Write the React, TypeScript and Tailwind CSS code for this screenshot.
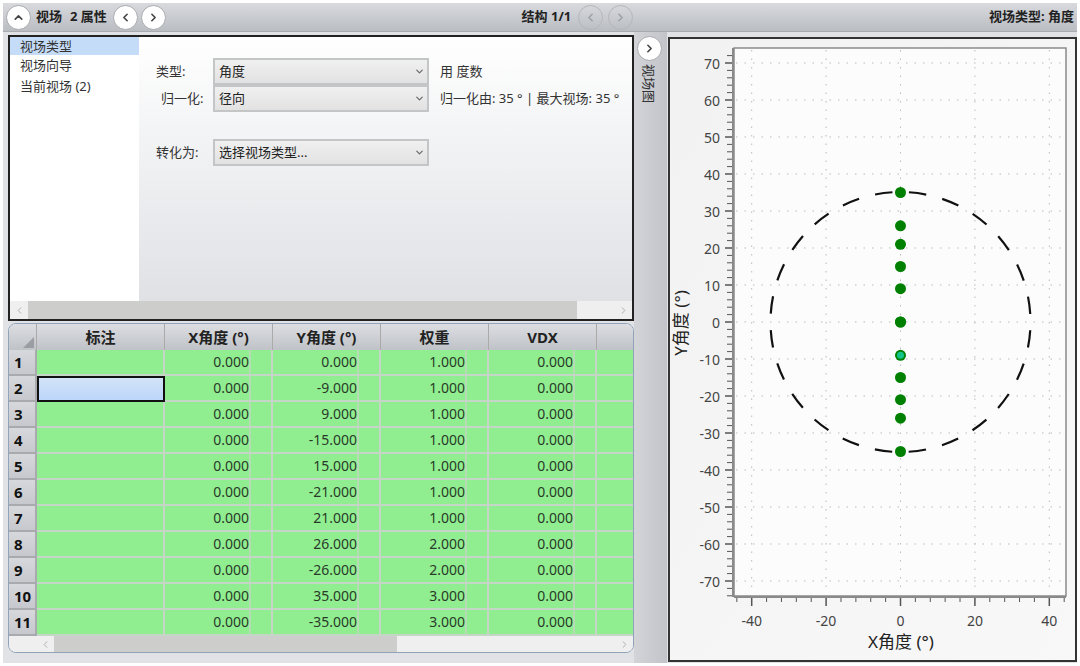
import { ChevronDown, ChevronLeft, ChevronRight, ChevronUp } from "lucide-react";

const rows = [
    ["0.000", "0.000", "1.000"],
    ["0.000", "-9.000", "1.000"],
    ["0.000", "9.000", "1.000"],
    ["0.000", "-15.000", "1.000"],
    ["0.000", "15.000", "1.000"],
    ["0.000", "-21.000", "1.000"],
    ["0.000", "21.000", "1.000"],
    ["0.000", "26.000", "2.000"],
    ["0.000", "-26.000", "2.000"],
    ["0.000", "35.000", "3.000"],
    ["0.000", "-35.000", "3.000"],
];

const fields = [0, 26, 21, 15, 9, 0, -9, -15, -21, -26, 35, -35];

const sx = (v: number) => 900.5 + v * 3.72;
const sy = (v: number) => 322 - v * 3.7;

const yMajor = [70, 60, 50, 40, 30, 20, 10, 0, -10, -20, -30, -40, -50, -60, -70];
const xMajor = [-40, -20, 0, 20, 40];

const RoundButton = ({ children, disabled }: { children: React.ReactNode; disabled?: boolean }) => (
    <div
        className={
            disabled
                ? "w-[25px] h-[25px] rounded-full border border-[#b4b6ba] flex items-center justify-center text-[#a0a2a6]"
                : "w-[25px] h-[25px] rounded-full bg-white border border-[#a8aaae] flex items-center justify-center text-[#444]"
        }
    >
        {children}
    </div>
);

const Select = ({ label }: { label: string }) => (
    <div className="w-[216px] h-[27px] flex items-center justify-between pl-[4px] pr-[2px] border-2 border-[#c4c5c7] bg-gradient-to-b from-[#f0f0f0] to-[#e2e2e2] text-[13px] text-[#222]">
        <span>{label}</span>
        <ChevronDown size={11} strokeWidth={2.5} className="text-[#666]" />
    </div>
);

const NumCell = ({ value }: { value: string }) => (
    <div className="flex border-r-2 border-b-2 border-[#c6d6c6] bg-[#90ee90] text-[14px] text-[#2a3a2a]">
        <div className="w-[84px] text-right leading-[24px]">{value}</div>
        <div className="flex-1 border-l-2 border-[#b6dcb6]" />
    </div>
);

const Chart = () => (
    <svg width="405" height="621" viewBox="670 39 405 621" className="block overflow-visible">
        <rect x="734" y="48" width="332" height="548" fill="#fcfcfc" stroke="#8a8a8a" strokeWidth="1.5" />
        {yMajor.map((v) => (
            <line key={v} x1="736" x2="1065" y1={sy(v)} y2={sy(v)} stroke="#bbb" strokeWidth="1" strokeDasharray="1.5 7" />
        ))}
        {xMajor.map((v) => (
            <line key={v} x1={sx(v)} x2={sx(v)} y1="50" y2="594" stroke="#bbb" strokeWidth="1" strokeDasharray="1.5 7" />
        ))}
        {Array.from({ length: 74 }, (_, i) => 72 - i * 2).map((v) => (
            <line key={v} x1={v % 10 === 0 ? 725 : 727} x2="734" y1={sy(v)} y2={sy(v)} stroke="#555" strokeWidth={v % 10 === 0 ? 1.5 : 1} />
        ))}
        {Array.from({ length: 23 }, (_, i) => -44 + i * 4).map((v) => (
            <line key={v} x1={sx(v)} x2={sx(v)} y1="596" y2={v % 20 === 0 ? 606 : 602} stroke="#555" strokeWidth={v % 20 === 0 ? 1.5 : 1} />
        ))}
        <line x1="734" x2="1066" y1="597" y2="597" stroke="#8a8a8a" strokeWidth="2" />
        <line x1="733" x2="733" y1="48" y2="597" stroke="#8a8a8a" strokeWidth="2" />
        {yMajor.map((v) => (
            <text key={v} x="720" y={sy(v) + 5.5} textAnchor="end" fontSize="14" fill="#444">{v}</text>
        ))}
        {xMajor.map((v) => (
            <text key={v} x={sx(v)} y="626" textAnchor="middle" fontSize="14" fill="#444">{v}</text>
        ))}
        <text x="901" y="648" textAnchor="middle" fontSize="17" fill="#222">X角度 (°)</text>
        <text x="687" y="323" textAnchor="middle" fontSize="17" fill="#222" transform="rotate(-90 687 323)">Y角度 (°)</text>
        <circle cx="900.5" cy="322" r="130" fill="none" stroke="#111" strokeWidth="2.2" strokeDasharray="17.5 16.53" transform="rotate(3.64 900.5 322)" />
        {fields.map((v, i) => (
            <circle key={i} cx="900.5" cy={sy(v)} r="5.5" fill="#008000" />
        ))}
        <circle cx="900.5" cy={sy(-9)} r="3.5" fill="#12c48a" />
    </svg>
);

export default function App() {
    return (
        <div className="w-[1080px] h-[666px] overflow-hidden bg-white pl-[3px] pt-[3px] pr-[3px] font-['Noto_Sans','Noto_Sans_CJK_SC',sans-serif]">
            <div className="h-[660px] bg-[#e0e2e6] flex flex-col">
                <div className="h-[29px] shrink-0 flex items-center justify-between pl-[3px] pr-[3px] bg-gradient-to-b from-[#d8dade] to-[#babdc2] border-b border-[#a9abaf] text-[13px] font-bold text-[#222]">
                    <div className="flex items-center">
                        <RoundButton><ChevronUp size={13} strokeWidth={3} /></RoundButton>
                        <span className="ml-[5px]">视场</span>
                        <span className="ml-[8px]">2 属性</span>
                        <div className="ml-[6px] flex gap-[3px]">
                            <RoundButton><ChevronLeft size={13} strokeWidth={3} /></RoundButton>
                            <RoundButton><ChevronRight size={13} strokeWidth={3} /></RoundButton>
                        </div>
                    </div>
                    <div className="flex items-center">
                        <span>结构 1/1</span>
                        <div className="ml-[7px] flex gap-[5px]">
                            <RoundButton disabled><ChevronLeft size={13} strokeWidth={3} /></RoundButton>
                            <RoundButton disabled><ChevronRight size={13} strokeWidth={3} /></RoundButton>
                        </div>
                    </div>
                    <span>视场类型: 角度</span>
                </div>

                <div className="flex flex-1 min-h-0">
                    <div className="w-[631px] shrink-0 pl-[5px] pt-[3px] flex flex-col">
                        <div className="h-[286px] border-2 border-[#222] flex flex-col bg-white">
                            <div className="flex flex-1 min-h-0">
                                <div className="w-[129px] shrink-0 bg-white text-[13px] text-[#333]">
                                    <div className="h-[18px] pl-[10px] leading-[18px] bg-[#c5dcf8]">视场类型</div>
                                    <div className="h-[21px] pl-[10px] leading-[21px]">视场向导</div>
                                    <div className="h-[20px] pl-[10px] leading-[20px]">当前视场 (2)</div>
                                </div>
                                <div className="flex-1 bg-gradient-to-b from-white to-[#dfe1e5] pt-[21px] text-[13px] text-[#333]">
                                    <div className="flex items-center h-[27px]">
                                        <div className="w-[74px] pl-[17px]">类型:</div>
                                        <Select label="角度" />
                                        <div className="ml-[11px]">用 度数</div>
                                    </div>
                                    <div className="flex items-center h-[27px]">
                                        <div className="w-[74px] pl-[22px]">归一化:</div>
                                        <Select label="径向" />
                                        <div className="ml-[11px] whitespace-nowrap">归一化由: 35 ° | 最大视场: 35 °</div>
                                    </div>
                                    <div className="flex items-center h-[27px] mt-[27px]">
                                        <div className="w-[74px] pl-[17px]">转化为:</div>
                                        <Select label="选择视场类型..." />
                                    </div>
                                </div>
                            </div>
                            <div className="h-[18px] shrink-0 flex items-center bg-[#cdcdcb]">
                                <div className="w-[18px] h-full bg-[#efefef] flex items-center justify-center text-[#aaa]"><ChevronLeft size={11} /></div>
                                <div className="flex-1" />
                                <div className="w-[55px] h-full bg-[#efefef] flex items-center justify-end pr-[3px] text-[#aaa]"><ChevronRight size={11} /></div>
                            </div>
                        </div>

                        <div className="mt-[2px] h-[330px] border border-[#8fa3ba] rounded-[8px] overflow-hidden flex flex-col bg-[#efefef]">
                            <div className="grid grid-cols-[28px_128px_108px_108px_108px_108px_1fr] h-[26px] shrink-0 bg-gradient-to-b from-[#dcdee2] to-[#bfc2c7] text-[15px] font-bold text-[#222] text-center leading-[26px]">
                                <div className="border-r border-[#aaa] flex items-end justify-end pr-[2px] pb-[2px]">
                                    <div className="w-0 h-0 border-l-[11px] border-l-transparent border-b-[11px] border-b-[#9a9da1]" />
                                </div>
                                <div className="border-r border-[#aaa]">标注</div>
                                <div className="border-r border-[#aaa]">X角度 (°)</div>
                                <div className="border-r border-[#aaa]">Y角度 (°)</div>
                                <div className="border-r border-[#aaa]">权重</div>
                                <div className="border-r border-[#aaa]">VDX</div>
                                <div />
                            </div>
                            <div className="grid grid-cols-[28px_128px_108px_108px_108px_108px_1fr] auto-rows-[26px] shrink-0">
                                {rows.map((row, i) => (
                                    <div key={i} className="contents">
                                        <div className="bg-gradient-to-b from-[#d6d8dc] to-[#c6c8cd] border-r-2 border-b-2 border-[#a8aaae] text-[15px] font-bold text-[#111] pl-[5px] leading-[24px]">{i + 1}</div>
                                        {i === 1 ? (
                                            <div className="bg-gradient-to-b from-[#d3e3f8] to-[#bcd6fa] border-2 border-[#111]" />
                                        ) : (
                                            <div className="bg-[#90ee90] border-r-2 border-b-2 border-[#c6d6c6]" />
                                        )}
                                        <NumCell value={row[0]} />
                                        <NumCell value={row[1]} />
                                        <NumCell value={row[2]} />
                                        <NumCell value="0.000" />
                                        <div className="bg-[#90ee90] border-b-2 border-[#c6d6c6]" />
                                    </div>
                                ))}
                            </div>
                            <div className="flex-1 flex items-center bg-[#cdcdcb]">
                                <div className="w-[45px] h-full bg-[#efefef] flex items-center justify-end pr-[3px] text-[#aaa]"><ChevronLeft size={11} /></div>
                                <div className="w-[343px] h-full" />
                                <div className="flex-1 h-full bg-[#efefef] flex items-center justify-end pr-[3px] text-[#aaa]"><ChevronRight size={11} /></div>
                            </div>
                        </div>
                    </div>

                    <div className="w-[33px] shrink-0 flex flex-col items-center pt-[4px] pr-[3px] bg-gradient-to-r from-[#d2d4d8] to-[#c2c4c9]">
                        <RoundButton><ChevronRight size={13} strokeWidth={3} /></RoundButton>
                        <span className="mt-[3px] text-[13px] leading-[16px] text-[#333] [writing-mode:vertical-rl] [text-orientation:sideways]">视场图</span>
                    </div>

                    <div className="flex-1 pt-[5px] pr-[1px] pl-[1px]">
                        <div className="w-[409px] h-[625px] border-2 border-[#333] bg-gradient-to-br from-[#f2f2f2] to-[#f8f8f8]">
                            <Chart />
                        </div>
                    </div>
                </div>
            </div>
        </div>
    );
}
